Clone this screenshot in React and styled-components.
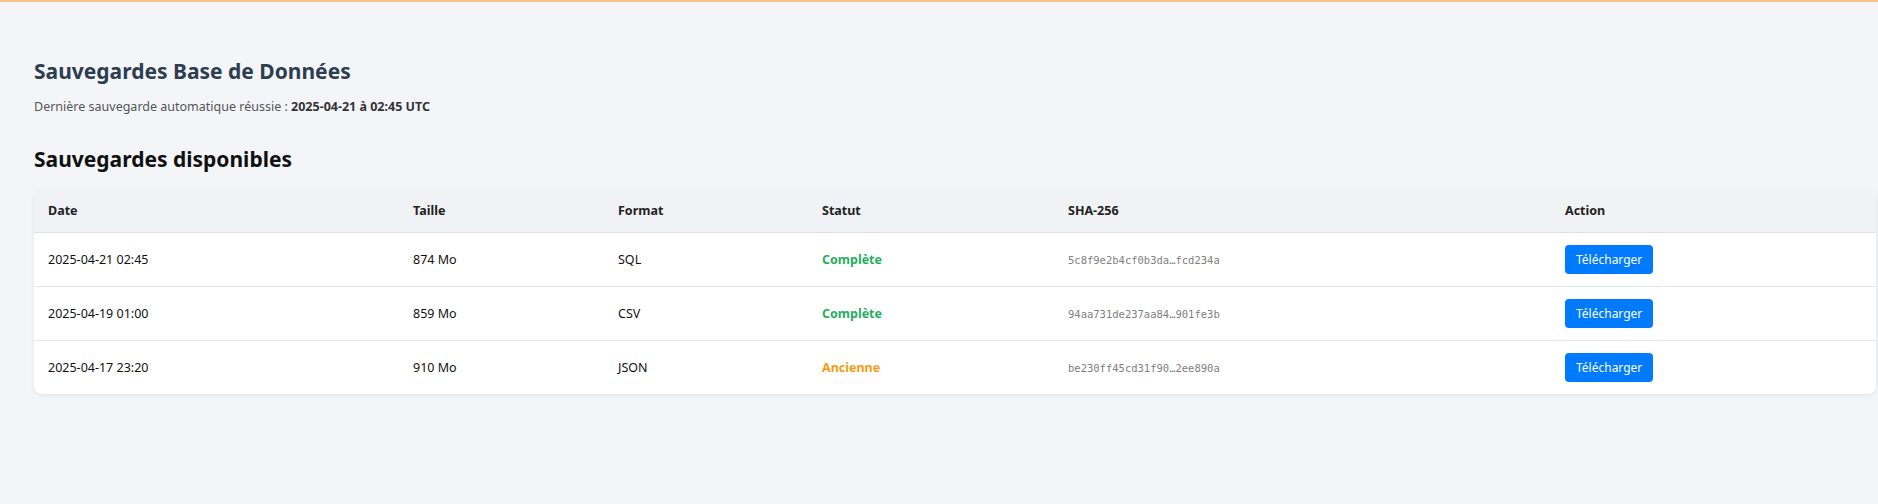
import styled, { createGlobalStyle } from "styled-components";

const GlobalStyle = createGlobalStyle`
  html, body {
    margin: 0;
    padding: 0;
    background: #f4f5f9;
  }
  body {
    border-top: 2px solid #f6c38e;
    font-family: "Noto Sans", "Open Sans", sans-serif;
  }
`;

const Page = styled.div`
  padding: 56px 2px 40px 34px;
`;

const Title = styled.h1`
  margin: 0;
  font-size: 21px;
  line-height: 26px;
  font-weight: 700;
  color: #2c3e50;
`;

const LastBackup = styled.p`
  margin: 14px 0 0;
  font-size: 12.5px;
  line-height: 18px;
  color: #555;

  strong {
    color: #333;
    font-weight: 700;
  }
`;

const SectionTitle = styled.h2`
  margin: 30px 0 0;
  font-size: 21px;
  line-height: 26px;
  font-weight: 700;
  color: #111;
`;

const TableCard = styled.div`
  margin-top: 18px;
  background: #fff;
  border-radius: 8px;
  box-shadow: 0 1px 4px rgba(0, 0, 0, 0.08);
  overflow: hidden;
`;

const Table = styled.table`
  width: 100%;
  table-layout: fixed;
  border-collapse: collapse;
  font-size: 12.5px;
`;

const Th = styled.th`
  box-sizing: border-box;
  text-align: left;
  font-weight: 700;
  color: #222;
  background: #f0f2f5;
  height: 42px;
  padding: 0 14px;
  border-bottom: 1px solid #dde1e6;
  width: ${(p) => (p.w ? `${p.w}px` : "auto")};
`;

const Row = styled.tr`
  & + & td {
    border-top: 1px solid #e3e6ea;
  }
`;

const Td = styled.td`
  height: 53px;
  padding: 0 14px;
  color: #111;
`;

const Status = styled.span`
  font-weight: 700;
  color: ${(p) => (p.old ? "#f39c12" : "#27ae60")};
`;

const Hash = styled.span`
  font-family: "DejaVu Sans Mono", "Liberation Mono", monospace;
  font-size: 10.5px;
  color: #808080;
`;

const DownloadButton = styled.button`
  background: #007bff;
  color: #fff;
  border: none;
  border-radius: 4px;
  height: 29px;
  padding: 0 11px;
  font-family: inherit;
  font-size: 12px;
  cursor: pointer;
`;

const backups = [
  { date: "2025-04-21 02:45", size: "874 Mo", format: "SQL", status: "Complète", old: false, hash: "5c8f9e2b4cf0b3da…fcd234a" },
  { date: "2025-04-19 01:00", size: "859 Mo", format: "CSV", status: "Complète", old: false, hash: "94aa731de237aa84…901fe3b" },
  { date: "2025-04-17 23:20", size: "910 Mo", format: "JSON", status: "Ancienne", old: true, hash: "be230ff45cd31f90…2ee890a" },
];

const App = () => {
  return (
    <Page>
      <GlobalStyle />
      <Title>Sauvegardes Base de Données</Title>
      <LastBackup>
        Dernière sauvegarde automatique réussie : <strong>2025-04-21 à 02:45 UTC</strong>
      </LastBackup>
      <SectionTitle>Sauvegardes disponibles</SectionTitle>
      <TableCard>
        <Table>
          <thead>
            <tr>
              <Th w={365}>Date</Th>
              <Th w={205}>Taille</Th>
              <Th w={204}>Format</Th>
              <Th w={246}>Statut</Th>
              <Th w={497}>SHA-256</Th>
              <Th>Action</Th>
            </tr>
          </thead>
          <tbody>
            {backups.map((b) => (
              <Row key={b.date}>
                <Td>{b.date}</Td>
                <Td>{b.size}</Td>
                <Td>{b.format}</Td>
                <Td>
                  <Status old={b.old}>{b.status}</Status>
                </Td>
                <Td>
                  <Hash>{b.hash}</Hash>
                </Td>
                <Td>
                  <DownloadButton>Télécharger</DownloadButton>
                </Td>
              </Row>
            ))}
          </tbody>
        </Table>
      </TableCard>
    </Page>
  );
};

export default App;
